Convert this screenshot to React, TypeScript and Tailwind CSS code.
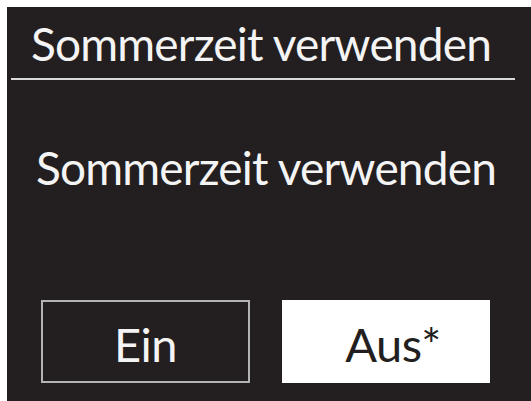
export default function App() {
  const font = { fontFamily: 'Lato, "Open Sans", sans-serif' };
  return (
    <div className="w-[531px] h-[401px] bg-white pl-[7px] pt-[7px]" style={font}>
      <div className="h-full w-full bg-[#231f20] flex flex-col">
        {/* Header */}
        <div className="h-[71px] pl-[24px] flex items-end">
          <span className="text-[46px] leading-none tracking-[-0.8px] text-[#f4f4f4] pb-[11px]">Sommerzeit verwenden</span>
        </div>
        <div className="ml-[4px] mr-[16px] h-[2px] bg-[#d8d8d8]" />

        {/* Body */}
        <div className="pl-[29px] pt-[65px] h-[220px]">
          <span className="text-[46px] leading-none tracking-[-0.8px] text-[#f4f4f4]">Sommerzeit verwenden</span>
        </div>

        {/* Buttons */}
        <div className="flex gap-[32px] pl-[34px]">
          <div className="w-[209px] h-[83px] border-2 border-[#b4b4b4] flex items-center justify-center">
            <span className="text-[47px] leading-none tracking-[-0.5px] text-[#f4f4f4] pt-[6px]">Ein</span>
          </div>
          <div className="w-[208px] h-[83px] bg-white flex items-center justify-center">
            <span className="text-[47px] leading-none tracking-[-0.5px] text-[#231f20] pt-[6px] pl-[14px]">Aus*</span>
          </div>
        </div>
      </div>
    </div>
  );
}
